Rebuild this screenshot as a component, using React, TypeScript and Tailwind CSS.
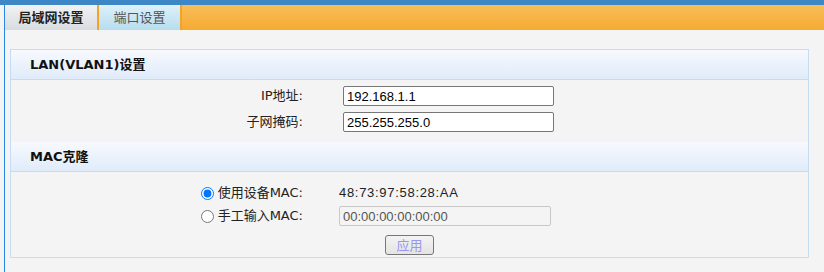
import React, { useState } from 'react';

const cjk = "font-['DejaVu_Sans','Noto_Sans_CJK_SC',sans-serif]";
const arial = "font-['Liberation_Sans','Noto_Sans_CJK_SC',sans-serif]";

const SectionHeader: React.FC<{ title: string }> = ({ title }) => (
  <div
    className={`h-[30px] flex items-center pl-[19px] border-b border-[#c6dcf1] bg-gradient-to-b from-[#f7f9fe] to-[#e0ebfa] text-[13px] font-bold text-[#111] ${cjk}`}
  >
    {title}
  </div>
);

const App: React.FC = () => {
  const [ip, setIp] = useState('192.168.1.1');
  const [mask, setMask] = useState('255.255.255.0');
  const [mode, setMode] = useState<'device' | 'manual'>('device');

  return (
    <div className="w-[824px] h-[272px] bg-[#f4f4f4] overflow-hidden">
      <div className="h-[5px] bg-[#3e87c7]" />
      <div className="ml-[4px] h-[267px] border-l border-[#2a86e6]">
        {/* tabs */}
        <div className="flex h-[25px] bg-gradient-to-b from-[#f9bd58] to-[#f6aa31]">
          <div
            className={`w-[92px] flex items-center justify-center bg-gradient-to-b from-[#f1f2f4] to-[#d8dce0] text-[13px] font-bold text-[#222] ${cjk}`}
          >
            局域网设置
          </div>
          <div className="w-[2px] bg-[#f4a326]" />
          <div
            className={`w-[81px] flex items-center justify-center bg-gradient-to-b from-[#ddf1fa] to-[#b6ddef] text-[13px] text-[#555] ${cjk}`}
          >
            端口设置
          </div>
          <div className="w-[2px] bg-[#f4a326]" />
        </div>

        <div className="pt-[19px] pl-[5px] pr-[15px]">
          <div className="border border-[#c6dcf1]">
            <SectionHeader title="LAN(VLAN1)设置" />
            <div className="pt-[6px] pb-[10px] flex flex-col gap-[6px]">
              <div className="flex items-center h-[20px]">
                <div className={`w-[292px] text-right text-[13px] text-[#222] ${cjk}`}>IP地址:</div>
                <input
                  value={ip}
                  onChange={(e) => setIp(e.target.value)}
                  className={`ml-[40px] w-[211px] h-[20px] px-[3px] border border-[#777] rounded-[2px] bg-white text-[13px] text-black outline-none ${arial}`}
                />
              </div>
              <div className="flex items-center h-[20px]">
                <div className={`w-[292px] text-right text-[13px] text-[#222] ${cjk}`}>子网掩码:</div>
                <input
                  value={mask}
                  onChange={(e) => setMask(e.target.value)}
                  className={`ml-[40px] w-[211px] h-[20px] px-[3px] border border-[#777] rounded-[2px] bg-white text-[13px] text-black outline-none ${arial}`}
                />
              </div>
            </div>

            <SectionHeader title="MAC克隆" />
            <div className="pt-[11px] pb-[2px] flex flex-col">
              <div className="flex items-center h-[20px]">
                <label className={`w-[292px] flex items-center justify-end text-[13px] text-[#222] ${cjk}`}>
                  <input
                    type="radio"
                    name="mac"
                    checked={mode === 'device'}
                    onChange={() => setMode('device')}
                    className="m-0 mr-[4px] w-[13px] h-[13px]"
                  />
                  使用设备MAC:
                </label>
                <span className={`ml-[36px] text-[13px] tracking-[0.7px] text-[#222] ${arial}`}>48:73:97:58:28:AA</span>
              </div>
              <div className="flex items-center h-[20px] mt-[3px]">
                <label className={`w-[292px] flex items-center justify-end text-[13px] text-[#222] ${cjk}`}>
                  <input
                    type="radio"
                    name="mac"
                    checked={mode === 'manual'}
                    onChange={() => setMode('manual')}
                    className="m-0 mr-[4px] w-[13px] h-[13px]"
                  />
                  手工输入MAC:
                </label>
                <input
                  disabled
                  value="00:00:00:00:00:00"
                  readOnly
                  className={`ml-[36px] w-[212px] h-[20px] px-[3px] border border-[#c8c8c8] rounded-[2px] bg-[#f4f4f4] text-[13px] text-[#555] ${arial}`}
                />
              </div>
              <div className="flex justify-center mt-[9px]">
                <button
                  className={`w-[49px] h-[20px] border border-[#777] rounded-[3px] bg-gradient-to-b from-[#f3f3f3] to-[#e4e4e4] text-[13px] text-[#9a96f0] leading-none ${cjk}`}
                >
                  应用
                </button>
              </div>
            </div>
          </div>
        </div>
      </div>
    </div>
  );
};

export default App;
